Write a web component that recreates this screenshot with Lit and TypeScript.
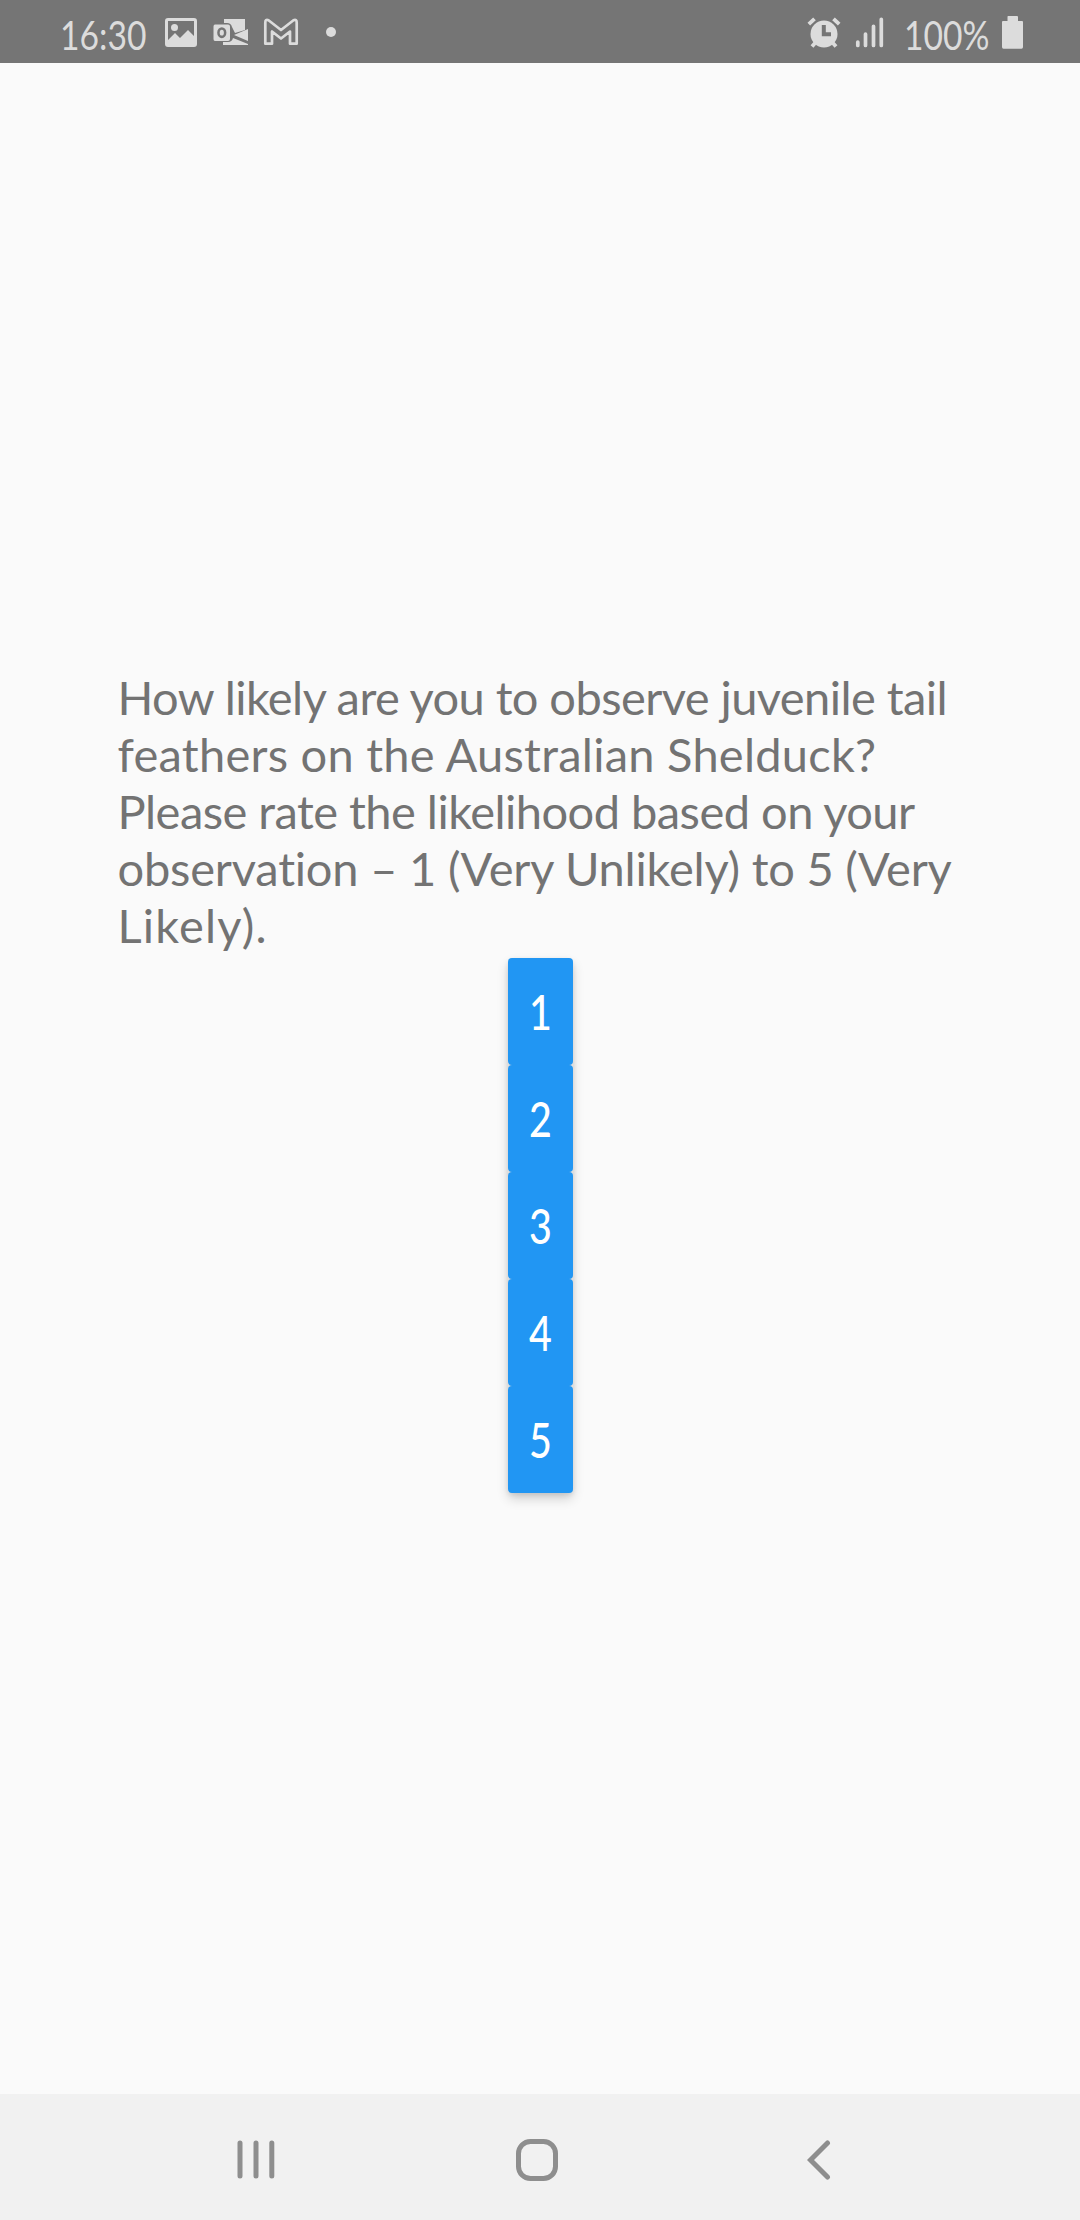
import { LitElement, html, css } from "lit";
import { customElement, state } from "lit/decorators.js";

@customElement("status-bar")
class StatusBar extends LitElement {
  static styles = css`
    :host {
      display: flex;
      justify-content: space-between;
      height: 63px;
      flex: none;
      padding: 0 56px 0 60px;
      box-sizing: border-box;
      background: #757575;
      color: #dcdcdc;
      font: 41px/63px Lato, "Open Sans", sans-serif;
    }
    .group {
      display: flex;
    }
    svg {
      display: block;
      height: 63px;
      flex: none;
      overflow: visible;
    }
    .clock,
    .battery-level {
      padding-top: 3px;
      transform: scaleX(0.82);
      transform-origin: 0 0;
      white-space: nowrap;
    }
    .clock {
      width: 105px;
    }
    .battery-level {
      width: 97px;
    }
  `;

  render() {
    return html`
      <div class="group">
        <span class="clock">16:30</span>
        <svg width="175" viewBox="165 0 175 63" fill="#dcdcdc">
          <path fill-rule="evenodd" d="M168 18H194Q197 18 197 21V44Q197 47 194 47H168Q165 47 165 44V21Q165 18 168 18ZM168 21V40L175 33L180 38L188 30L194 36V21Z" />
          <circle cx="174.5" cy="27.5" r="3.5" />
          <path d="M224 19H245V30L235 33L232 27Q231 23 227 23H224Z" />
          <path d="M234 35L248 29V41ZM233 38L248 44V45H223V42H228Q232 42 233 38Z" />
          <path fill-rule="evenodd" d="M215 24.500H228Q230 24.500 230 26.500V39Q230 41 228 41H215Q213.500 41 213.500 39V26.500Q213.500 24.500 215 24.500ZM221.800 27.200A4.600 5.500 0 1 0 221.800 38.200A4.600 5.500 0 1 0 221.800 27.200ZM221.800 29.800A2.100 2.900 0 1 1 221.800 35.600A2.100 2.900 0 1 1 221.800 29.800Z" />
          <path d="M265.300 43.700V22.500Q265.300 19 268.500 20.300L281 30L293.500 20.300Q296.700 19 296.700 22.500V43.700H290V31.500L281 38.500L272 31.500V43.700Z" fill="none" stroke="#dcdcdc" stroke-width="2.700" stroke-linejoin="round" />
          <circle cx="331" cy="32" r="5" />
        </svg>
      </div>
      <div class="group">
        <svg width="97" viewBox="807 0 97 63" fill="#dcdcdc">
          <circle cx="824" cy="34" r="13.500" />
          <path d="M816 42L812 46.500M832 42L836 46.500M808.800 24.200L814.500 18.800M839.200 24.200L833.500 18.800" stroke="#dcdcdc" stroke-width="3.800" />
          <path d="M823.800 25V34.300H831" fill="none" stroke="#757575" stroke-width="4" />
          <path d="M857.800 42V45.500M865.500 34V45.500M873.500 26.300V45.500M881.300 19.300V45.500" stroke="#dcdcdc" stroke-width="3.700" stroke-linecap="round" />
        </svg>
        <span class="battery-level">100%</span>
        <svg width="23" viewBox="1001 0 23 63" fill="#dcdcdc">
          <path d="M1008 16H1017Q1018 16 1018 17V21H1022Q1023 21 1023 22V47Q1023 48.700 1021.500 48.700H1003.500Q1002 48.700 1002 47V22Q1002 21 1003 21H1007.500V17Q1007.500 16 1008 16Z" />
        </svg>
      </div>
    `;
  }
}

@customElement("rating-scale")
class RatingScale extends LitElement {
  static styles = css`
    :host {
      display: flex;
      flex-direction: column;
      width: 65px;
      border-radius: 5px;
      background: #dedede;
      box-shadow: 0 6px 12px rgba(0, 0, 0, 0.16), 0 2px 5px rgba(0, 0, 0, 0.1);
    }
    .rate {
      height: 107px;
      padding: 0;
      box-sizing: border-box;
      border: 0;
      border-radius: 4px;
      background: #2196f3;
      color: #fff;
      font: 500 48px/107px Lato, "Open Sans", sans-serif;
    }
    .digit {
      display: block;
      transform: scaleX(0.82);
    }
  `;

  @state() private selected = 0;

  render() {
    return [1, 2, 3, 4, 5].map(
      (n) => html`<button class="rate" @click=${() => (this.selected = n)}><span class="digit">${n}</span></button>`
    );
  }
}

@customElement("navigation-bar")
class NavigationBar extends LitElement {
  static styles = css`
    :host {
      display: flex;
      align-items: center;
      height: 126px;
      flex: none;
      box-sizing: border-box;
      padding: 6px 0 0 235px;
      background: #f1f1f1;
    }
    svg {
      display: block;
      fill: none;
      stroke: #8e8e8e;
      stroke-width: 5;
      stroke-linecap: round;
    }
    .home {
      margin: 0 249px 0 239px;
    }
  `;

  render() {
    return html`
      <svg width="42" height="42" viewBox="0 0 42 42"><path d="M5 4V37M21 4V37M36.800 4V37" /></svg>
      <svg class="home" width="42" height="42" viewBox="0 0 42 42"><rect x="2.500" y="2.500" width="37" height="37" rx="12" /></svg>
      <svg width="28" height="42" viewBox="0 0 28 42"><path d="M20.500 4L3.500 21L20.500 38" /></svg>
    `;
  }
}

@customElement("app-root")
class AppRoot extends LitElement {
  static styles = css`
    :host {
      display: flex;
      flex-direction: column;
      width: 1080px;
      height: 2220px;
      background: #fafafa;
    }
    main {
      flex: 1;
      display: flex;
      flex-direction: column;
      align-items: center;
      justify-content: center;
      padding: 0 0 1px 1px;
    }
    .question {
      margin: 0;
      width: 846px;
      height: 295px;
      padding-top: 6px;
      box-sizing: border-box;
      color: #737373;
      font: 47px/57px Lato, "Open Sans", sans-serif;
      font-variant-ligatures: none;
      white-space: nowrap;
    }
    .line {
      display: block;
    }
    .l1 {
      letter-spacing: -0.57px;
    }
    .l2 {
      letter-spacing: 0.25px;
    }
    .l3 {
      letter-spacing: -0.53px;
    }
    .l4 {
      letter-spacing: -0.2px;
    }
    .l5 {
      letter-spacing: 1.2px;
    }
  `;

  render() {
    return html`
      <status-bar></status-bar>
      <main>
        <p class="question">
          <span class="line l1">How likely are you to observe juvenile tail</span>
          <span class="line l2">feathers on the Australian Shelduck?</span>
          <span class="line l3">Please rate the likelihood based on your</span>
          <span class="line l4">observation – 1 (Very Unlikely) to 5 (Very</span>
          <span class="line l5">Likely).</span>
        </p>
        <rating-scale></rating-scale>
      </main>
      <navigation-bar></navigation-bar>
    `;
  }
}
